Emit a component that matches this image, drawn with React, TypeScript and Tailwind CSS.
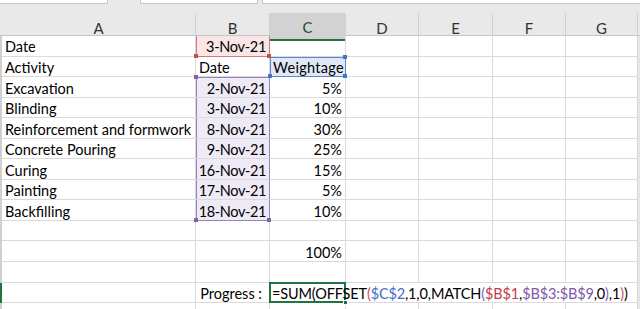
import React from "react";

interface Row {
  a?: string;
  b?: string;
  c?: string;
}

const rows: Row[] = [
  { a: "Excavation", b: "2-Nov-21", c: "5%" },
  { a: "Blinding", b: "3-Nov-21", c: "10%" },
  { a: "Reinforcement and formwork", b: "8-Nov-21", c: "30%" },
  { a: "Concrete Pouring", b: "9-Nov-21", c: "25%" },
  { a: "Curing", b: "16-Nov-21", c: "15%" },
  { a: "Painting", b: "17-Nov-21", c: "5%" },
  { a: "Backfilling", b: "18-Nov-21", c: "10%" },
];

const grid = "grid grid-cols-[2px_194px_74px_76px_73px_74px_73px_72px_2px]";
const cell = "h-[20.55px] border-r border-b border-[#dadada] flex items-center pt-[3px] px-[3px] whitespace-nowrap relative";

const Handle = ({ pos, color }: { pos: string; color: string }) => (
  <span className={`absolute w-[4px] h-[4px] z-10 ${pos} ${color}`} />
);

const Empty = () => (
  <>
    <div className="bg-[#d0d0d0]" />
    <div className={cell} />
    <div className={cell} />
    <div className={cell} />
    <div className={cell} />
    <div className={cell} />
    <div className={cell} />
    <div className={cell} />
    <div className="bg-[#e6e6e6]" />
  </>
);

// columns D..G plus the scrollbar strip
const Rest = () => (
  <>
    <div className={cell} />
    <div className={cell} />
    <div className={cell} />
    <div className={cell} />
    <div className="bg-[#e6e6e6]" />
  </>
);

const App: React.FC = () => {
  return (
    <div className="w-[640px] h-[309px] overflow-hidden bg-white font-['Lato',sans-serif] text-[14.5px] text-black">
      {/* formula bar remnants */}
      <div className="h-[13px] bg-[#e9e9e9] flex items-start">
        <div className="w-[108px] h-[4px] bg-white border-b border-r border-[#c6c6c6]" />
        <div className="w-[32px]" />
        <div className="w-[118px] h-[4px] bg-white border-b border-x border-[#c6c6c6]" />
        <div className="w-[4px]" />
        <div className="flex-1 h-[4px] bg-white border-b border-l border-[#c6c6c6]" />
      </div>

      {/* column headers */}
      <div className={`${grid} h-[23px] bg-[#e9e9e9] border-b border-[#c6c6c6] text-[#333] text-[15px]`}>
        <div />
        {["A", "B", "C", "D", "E", "F", "G"].map((l) => (
          <div
            key={l}
            className={`flex items-center justify-center pt-[3px] border-r border-[#d0d0d0] ${
              l === "C" ? "bg-[#d2d2d2] border-b-2 border-b-[#217346] text-[#2a4a36]" : ""
            }`}
          >
            {l}
          </div>
        ))}
        <div />
      </div>

      <div className={grid}>
        {/* row 1 */}
        <div className="bg-[#d0d0d0]" />
        <div className={cell}>Date</div>
        <div className={`${cell} justify-end tracking-[-0.3px] !border-[#cf7b86] shadow-[inset_1px_0_0_#cf7b86] bg-[#fae5e7]`}>
          3-Nov-21
          <Handle pos="-left-[2px] -bottom-[2px]" color="bg-[#c0504d]" />
          <Handle pos="-right-[2px] -bottom-[2px]" color="bg-[#c0504d]" />
        </div>
        <div className={cell} />
        <Rest />

        {/* row 2 */}
        <div className="bg-[#d0d0d0]" />
        <div className={cell}>Activity</div>
        <div className={cell}>Date</div>
        <div className={`${cell} tracking-[0.3px] bg-[#dfe8f5] !border-[#5b86cf] shadow-[inset_1px_0_0_#5b86cf,inset_0_1px_0_#5b86cf]`}>
          Weightage
          <Handle pos="-right-[2px] -top-[2px]" color="bg-[#4472c4]" />
          <Handle pos="-right-[2px] -bottom-[2px]" color="bg-[#4472c4]" />
          <Handle pos="-left-[2px] -bottom-[2px]" color="bg-[#4472c4]" />
        </div>
        <Rest />

        {rows.map((r, i) => (
          <React.Fragment key={r.a}>
            <div className="bg-[#d0d0d0]" />
            <div className={cell}>{r.a}</div>
            <div
              className={`${cell} justify-end tracking-[-0.4px] bg-[#efebf6] !border-r-[#9580c0] ${
                i === 0
                  ? "shadow-[inset_1px_0_0_#9580c0,inset_0_1px_0_#9580c0]"
                  : "shadow-[inset_1px_0_0_#9580c0]"
              } ${i === rows.length - 1 ? "!border-b-[#9580c0]" : ""}`}
            >
              {r.b}
              {i === 0 && <Handle pos="-left-[2px] -top-[2px]" color="bg-[#8064a2]" />}
              {i === rows.length - 1 && (
                <>
                  <Handle pos="-left-[2px] -bottom-[2px]" color="bg-[#8064a2]" />
                  <Handle pos="-right-[2px] -bottom-[2px]" color="bg-[#8064a2]" />
                </>
              )}
            </div>
            <div className={`${cell} justify-end`}>{r.c}</div>
            <Rest />
          </React.Fragment>
        ))}

        <Empty />

        {/* row 11 */}
        <div className="bg-[#d0d0d0]" />
        <div className={cell} />
        <div className={cell} />
        <div className={`${cell} justify-end`}>100%</div>
        <Rest />

        <Empty />

        {/* row 13 */}
        <div className="bg-[#217346]" />
        <div className={cell} />
        <div className={`${cell} justify-end !pr-[7px]`}>Progress :</div>
        <div className={`${cell} z-10 !px-0`}>
          <span className="absolute -left-px -top-px w-[77px] h-[21.5px] border-2 border-[#217346]" />
          <span className="relative pl-[2px] tracking-[-0.15px]">
            =SUM(OFFSET<span className="text-[#d0505a]">(</span>
            <span className="text-[#3f70c8]">$C$2</span>,1,0,MATCH
            <span className="text-[#8a5db8]">(</span>
            <span className="text-[#c43b4c]">$B$1</span>,
            <span className="text-[#7d5aa8]">$B$3:$B$9</span>,0
            <span className="text-[#8a5db8]">)</span>,1<span className="text-[#d0505a]">)</span>)
          </span>
          <span className="absolute -right-[3px] -bottom-[3px] w-[5px] h-[5px] bg-[#217346] border border-white" />
        </div>
        <div className={`${cell} border-r-0`} />
        <div className={`${cell} border-r-0`} />
        <div className={`${cell} border-r-0`} />
        <div className={cell} />
        <div className="bg-[#e6e6e6]" />

        <Empty />
      </div>
    </div>
  );
};

export default App;
